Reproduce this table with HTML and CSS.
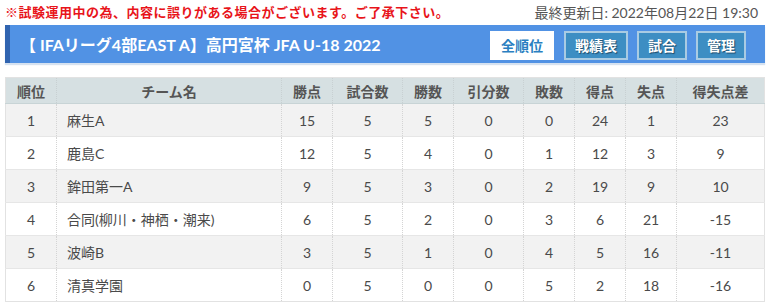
FILE: index.html
```html
<!DOCTYPE html>
<html lang="ja">
<head>
<meta charset="utf-8">
<link rel="stylesheet" href="styles.css">
</head>
<body>
<div class="page">
  <div class="topline">
    <span class="notice">※試験運用中の為、内容に誤りがある場合がございます。ご了承下さい。</span>
    <span class="updated">最終更新日: 2022年08月22日 19:30</span>
  </div>
  <div class="titlebar">
    <h1 class="title">【 IFAリーグ4部EAST A】高円宮杯 JFA U-18 2022</h1>
    <nav class="tabs">
      <span class="tab active">全順位</span>
      <span class="tab">戦績表</span>
      <span class="tab">試合</span>
      <span class="tab">管理</span>
    </nav>
  </div>
  <table class="standings">
    <colgroup>
      <col class="c-rank"><col class="c-team"><col class="c2"><col class="c3"><col class="c2"><col class="c3"><col class="c2"><col class="c2"><col class="c2"><col class="c4">
    </colgroup>
    <thead>
      <tr><th>順位</th><th>チーム名</th><th>勝点</th><th>試合数</th><th>勝数</th><th>引分数</th><th>敗数</th><th>得点</th><th>失点</th><th>得失点差</th></tr>
    </thead>
    <tbody>
      <tr><td>1</td><td class="team">麻生A</td><td>15</td><td>5</td><td>5</td><td>0</td><td>0</td><td>24</td><td>1</td><td>23</td></tr>
      <tr><td>2</td><td class="team">鹿島C</td><td>12</td><td>5</td><td>4</td><td>0</td><td>1</td><td>12</td><td>3</td><td>9</td></tr>
      <tr><td>3</td><td class="team">鉾田第一A</td><td>9</td><td>5</td><td>3</td><td>0</td><td>2</td><td>19</td><td>9</td><td>10</td></tr>
      <tr><td>4</td><td class="team">合同(柳川・神栖・潮来)</td><td>6</td><td>5</td><td>2</td><td>0</td><td>3</td><td>6</td><td>21</td><td>-15</td></tr>
      <tr><td>5</td><td class="team">波崎B</td><td>3</td><td>5</td><td>1</td><td>0</td><td>4</td><td>5</td><td>16</td><td>-11</td></tr>
      <tr><td>6</td><td class="team">清真学園</td><td>0</td><td>5</td><td>0</td><td>0</td><td>5</td><td>2</td><td>18</td><td>-16</td></tr>
    </tbody>
  </table>
</div>
</body>
</html>
```

FILE: styles.css
```css
* { box-sizing: border-box; }
html, body { margin: 0; padding: 0; background: #fff; }
body {
  font-family: Lato, "Noto Sans CJK JP", sans-serif;
  color: #444;
}
.page { padding: 3px 5px 0 5px; width: 770px; }
.topline {
  display: flex;
  justify-content: space-between;
  align-items: center;
  height: 17px;
  padding-right: 7px;
  white-space: nowrap;
}
.notice {
  color: #e8141a;
  font-size: 13px;
  font-weight: 700;
  letter-spacing: 0.5px;
}
.updated { color: #555; font-size: 14px; }
.titlebar {
  margin-top: 5px;
  height: 38px;
  background: #5192e4;
  border-left: 5px solid #3064b0;
  box-shadow: 0 2px 1px #d6e2f0;
  display: flex;
  align-items: center;
  justify-content: space-between;
  padding: 0 19px 0 10px;
}
.title {
  margin: 0;
  font-size: 16px;
  font-weight: 700;
  color: #fff;
}
.tabs { display: flex; gap: 9px; margin-top: 2px; }
.tab {
  display: flex;
  align-items: center;
  justify-content: center;
  height: 29px;
  padding: 0 9px;
  font-size: 14px;
  font-weight: 700;
  color: #fff;
  background: #3d8ec3;
  border: 2px solid #a9cbe3;
  text-shadow: 1px 1px 1px #1d4a6a;
}
.tab.active {
  background: #fff;
  color: #2a7fc1;
  border-color: #fff;
  text-shadow: none;
  margin-right: 1px;
}
.standings {
  margin-top: 14px;
  width: 760px;
  border-collapse: collapse;
  table-layout: fixed;
  font-size: 14px;
  border: 1px solid #e2e2e2;
}
.c-rank { width: 51px; }
.c-team { width: 225px; }
.c2 { width: 51px; }
.c3 { width: 70px; }
.c4 { width: 88px; }
.standings th {
  background: #d6e0e2;
  height: 26px;
  font-weight: 700;
  color: #555;
  text-align: center;
  border-left: 1px dotted #c8d0d2;
  border-bottom: 1px solid #c8d4d6;
  padding: 0;
}
.standings td {
  height: 33px;
  text-align: center;
  color: #4a4a4a;
  border-left: 1px dotted #d4d4d4;
  border-top: 1px solid #e6e6e6;
  padding: 0;
}
.standings td.team { text-align: left; padding-left: 10px; }
.standings tbody tr:nth-child(odd) td { background: #f2f2f2; }
.standings tbody tr:nth-child(even) td { background: #fff; }
```
